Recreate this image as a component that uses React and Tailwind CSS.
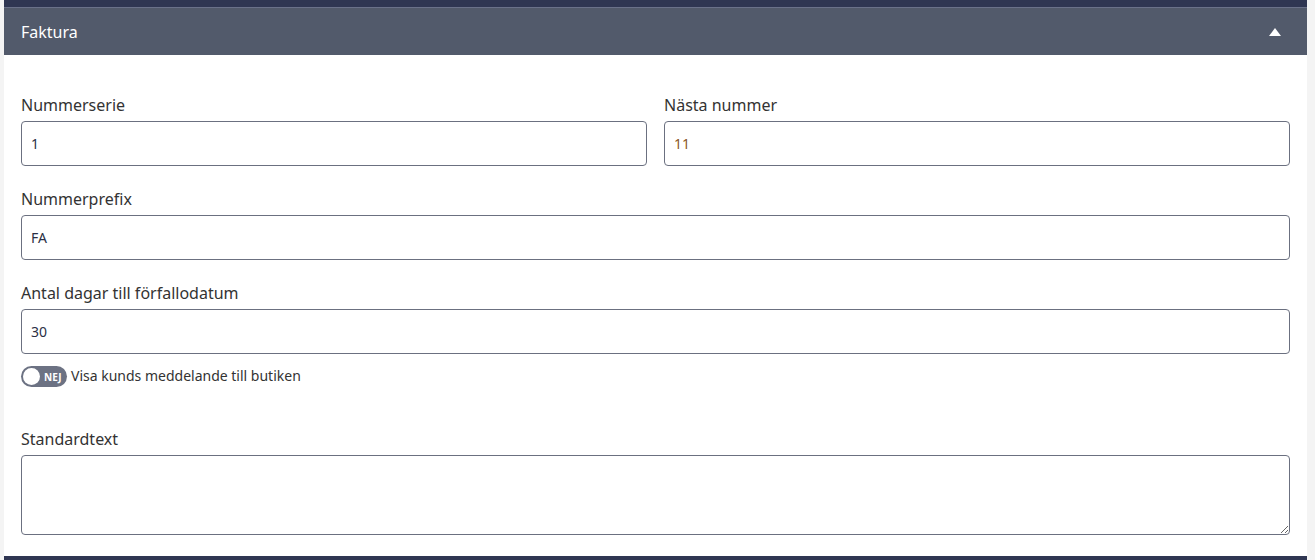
import React from "react";

function Field({ label, value, valueClass = "text-[#2b2f45]" }) {
  return (
    <div className="flex flex-col">
      <label className="text-[16px] leading-[24px] text-[#333] mb-[4px]">{label}</label>
      <input
        readOnly
        value={value}
        className={`h-[45px] w-full rounded-[4px] border border-[#6b7080] px-[9px] text-[14px] outline-none ${valueClass}`}
      />
    </div>
  );
}

export default function App() {
  return (
    <div
      className="w-[1315px] h-[560px] overflow-hidden bg-[#f4f4f4] flex"
      style={{ fontFamily: '"Noto Sans", "Open Sans", sans-serif' }}
    >
      <div className="ml-[4px] w-[1303px] shrink-0 flex flex-col">
        <div className="h-[7px] bg-[#2f3652]" />
        <div className="h-[1px] bg-[#6a7189]" />
        <div className="h-[47px] bg-[#525a6b] flex items-center justify-between pl-[17px] pr-[26px]">
          <span className="text-white text-[16px]">Faktura</span>
          <svg width="12" height="8" viewBox="0 0 12 8">
            <polygon points="6,0 12,8 0,8" fill="#fff" />
          </svg>
        </div>
        <div className="bg-white px-[17px] pt-[38px] pb-[21px] flex flex-col">
          <div className="grid grid-cols-2 gap-x-[17px]">
            <Field label="Nummerserie" value="1" />
            <Field label="Nästa nummer" value="11" valueClass="text-[#8a5526]" />
          </div>
          <div className="mt-[21px]">
            <Field label="Nummerprefix" value="FA" />
          </div>
          <div className="mt-[21px]">
            <Field label="Antal dagar till förfallodatum" value="30" />
          </div>
          <div className="mt-[12px] flex items-center gap-[4px] h-[21px]">
            <div className="w-[46px] h-[21px] rounded-full bg-[#6c7283] flex items-center pl-[2px]">
              <div className="w-[17px] h-[17px] rounded-full bg-white" />
              <span className="ml-[4px] text-white text-[10px] font-bold leading-none">NEJ</span>
            </div>
            <span className="text-[14px] text-[#333] -mt-[2px]">Visa kunds meddelande till butiken</span>
          </div>
          <div className="mt-[40px] flex flex-col">
            <label className="text-[16px] leading-[24px] text-[#333] mb-[4px]">Standardtext</label>
            <textarea className="h-[80px] w-full rounded-[4px] border border-[#6b7080] px-[9px] py-[6px] text-[14px] outline-none" />
          </div>
        </div>
        <div className="flex-1 bg-[#2f3652]" />
      </div>
    </div>
  );
}
